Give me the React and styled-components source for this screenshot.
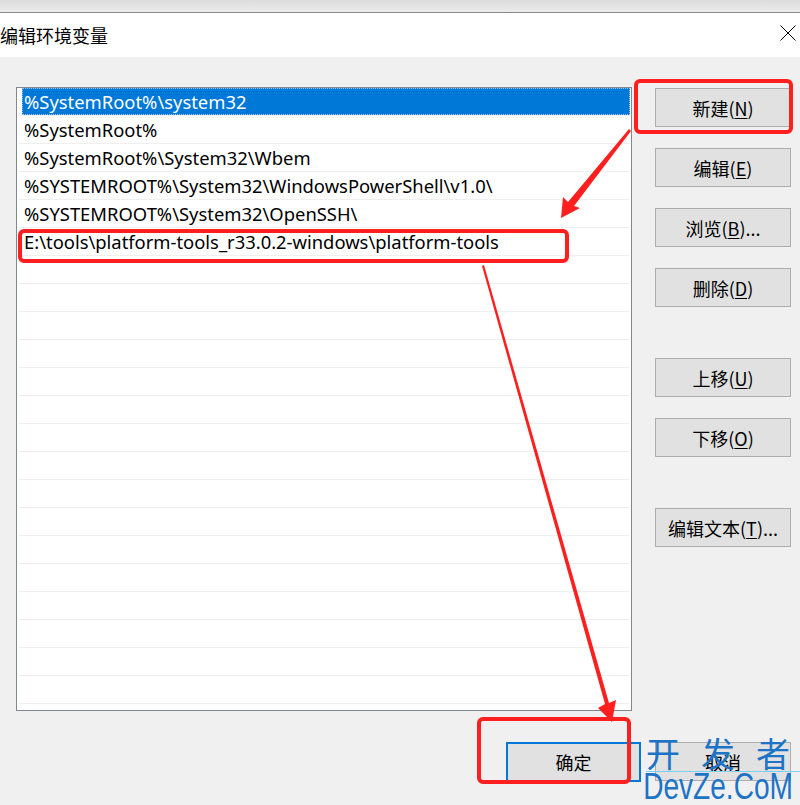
import React from 'react';
import styled, { createGlobalStyle } from 'styled-components';

const GlobalStyle = createGlobalStyle`
  html, body {
    margin: 0;
    padding: 0;
    background: #f0f0f0;
  }
  body {
    font-family: "Noto Sans", "Noto Sans CJK SC", sans-serif;
    overflow: hidden;
  }
`;

const paths = [
    { text: '%SystemRoot%\\system32', selected: true },
    { text: '%SystemRoot%' },
    { text: '%SystemRoot%\\System32\\Wbem' },
    { text: '%SYSTEMROOT%\\System32\\WindowsPowerShell\\v1.0\\' },
    { text: '%SYSTEMROOT%\\System32\\OpenSSH\\' },
    { text: 'E:\\tools\\platform-tools_r33.0.2-windows\\platform-tools' },
];

const emptyRows = 22 - paths.length;

const App = () => {
    return (
        <Window>
            <GlobalStyle />
            <TopStrip />
            <TitleBar>
                <Title>编辑环境变量</Title>
                <CloseIcon viewBox="0 0 16 16">
                    <path d="M0.5 0.5 L15.5 15.5 M15.5 0.5 L0.5 15.5" stroke="#000" strokeWidth="1" fill="none" />
                </CloseIcon>
            </TitleBar>

            <Body>
                <ListBox>
                    {paths.map((p) => (
                        <Row key={p.text}>
                            <Cell selected={p.selected}>{p.text}</Cell>
                        </Row>
                    ))}
                    {Array.from({ length: emptyRows }).map((_, i) => (
                        <Row key={i}>
                            <Cell />
                        </Row>
                    ))}
                </ListBox>

                <ButtonColumn>
                    <Button>新建(<u>N</u>)</Button>
                    <Button>编辑(<u>E</u>)</Button>
                    <Button>浏览(<u>B</u>)...</Button>
                    <Button>删除(<u>D</u>)</Button>
                    <Button spaced>上移(<u>U</u>)</Button>
                    <Button>下移(<u>O</u>)</Button>
                    <Button spaced>编辑文本(<u>T</u>)...</Button>
                </ButtonColumn>
            </Body>

            <Footer>
                <Button primary>确定</Button>
                <Button>取消</Button>
            </Footer>

            <Watermark>
                <WatermarkTop>开发者</WatermarkTop>
                <WatermarkBottom>DevZe.CoM</WatermarkBottom>
            </Watermark>

            <Annotations viewBox="0 0 800 805">
                <g fill="none" stroke="#ff1f1f" strokeWidth="4">
                    <rect x="636" y="81" width="155" height="51" rx="4" />
                    <rect x="20" y="231" width="547" height="30" rx="4" />
                    <rect x="479" y="719" width="150" height="63" rx="4" />
                </g>
                <g fill="#ff1f1f">
                    <polygon points="629,129 631,131 574,206 580,208 561,218 563,197 568,202" />
                    <polygon points="482,266 484,265 609,703 616,700 612,722 598,708 605,704" />
                </g>
            </Annotations>
        </Window>
    );
};

export default App;

const Window = styled.div`
    position: relative;
    width: 800px;
    height: 805px;
    background: #f0f0f0;
    overflow: hidden;
`;

const TopStrip = styled.div`
    height: 12px;
    background: linear-gradient(#dcdcdc, #ebebeb);
    border-bottom: 1px solid #8a8a8a;
`;

const TitleBar = styled.div`
    height: 44px;
    background: #ffffff;
    display: flex;
    align-items: center;
    justify-content: space-between;
    padding-right: 4px;
`;

const Title = styled.div`
    font-family: "Noto Sans CJK SC", sans-serif;
    font-size: 18px;
    color: #000;
    margin-top: -1px;
`;

const CloseIcon = styled.svg`
    width: 16px;
    height: 16px;
    margin-top: -4px;
`;

const Body = styled.div`
    display: flex;
    align-items: flex-start;
    padding: 30px 0 0 16px;
`;

const ListBox = styled.div`
    width: 614px;
    height: 622px;
    border: 1px solid #828790;
    background: #ffffff;
    display: flex;
    flex-direction: column;
`;

const Row = styled.div`
    height: 27px;
    margin: 0 1px;
    border-bottom: 1px solid #efefef;
    display: flex;
    flex-shrink: 0;
`;

const Cell = styled.div`
    flex: 1;
    margin-left: 4px;
    padding-left: 2px;
    font-size: 18.4px;
    line-height: 27px;
    white-space: nowrap;
    color: ${(p) => (p.selected ? '#ffffff' : '#000000')};
    background: ${(p) => (p.selected ? '#0078d7' : 'transparent')};
    outline: ${(p) => (p.selected ? '1px dotted #9fc6ec' : 'none')};
    outline-offset: -1px;
`;

const ButtonColumn = styled.div`
    display: flex;
    flex-direction: column;
    gap: 21px;
    margin-left: 23px;
    margin-top: 1px;
`;

const Button = styled.div`
    box-sizing: border-box;
    width: ${(p) => (p.primary ? '135px' : '136px')};
    height: ${(p) => (p.primary ? '40px' : '39px')};
    margin-top: ${(p) => (p.spaced ? '30px' : '0')};
    background: #e1e1e1;
    border: ${(p) => (p.primary ? '2px solid #0078d7' : '1px solid #adadad')};
    display: flex;
    align-items: center;
    justify-content: center;
    font-family: "Noto Sans CJK SC", sans-serif;
    font-size: 18px;
    color: #000;

    u {
        text-underline-offset: 2px;
    }
`;

const Footer = styled.div`
    display: flex;
    justify-content: flex-end;
    align-items: flex-start;
    gap: 14px;
    padding: 31px 9px 0 0;
`;

const Watermark = styled.div`
    position: absolute;
    left: 643px;
    top: 735px;
    width: 150px;
    display: flex;
    flex-direction: column;
    align-items: center;
    color: #1d74c6;
    pointer-events: none;
`;

const WatermarkTop = styled.div`
    font-family: "Noto Sans CJK SC", sans-serif;
    font-size: 34px;
    line-height: 36px;
    letter-spacing: 21px;
    margin-right: -21px;
    white-space: pre;
    border-bottom: 1px solid #7fd0f0;
`;

const WatermarkBottom = styled.div`
    font-family: "Liberation Sans", sans-serif;
    font-size: 36px;
    line-height: 30px;
    transform: scaleX(0.78);
    white-space: nowrap;
`;

const Annotations = styled.svg`
    position: absolute;
    left: 0;
    top: 0;
    width: 800px;
    height: 805px;
    pointer-events: none;
`;
